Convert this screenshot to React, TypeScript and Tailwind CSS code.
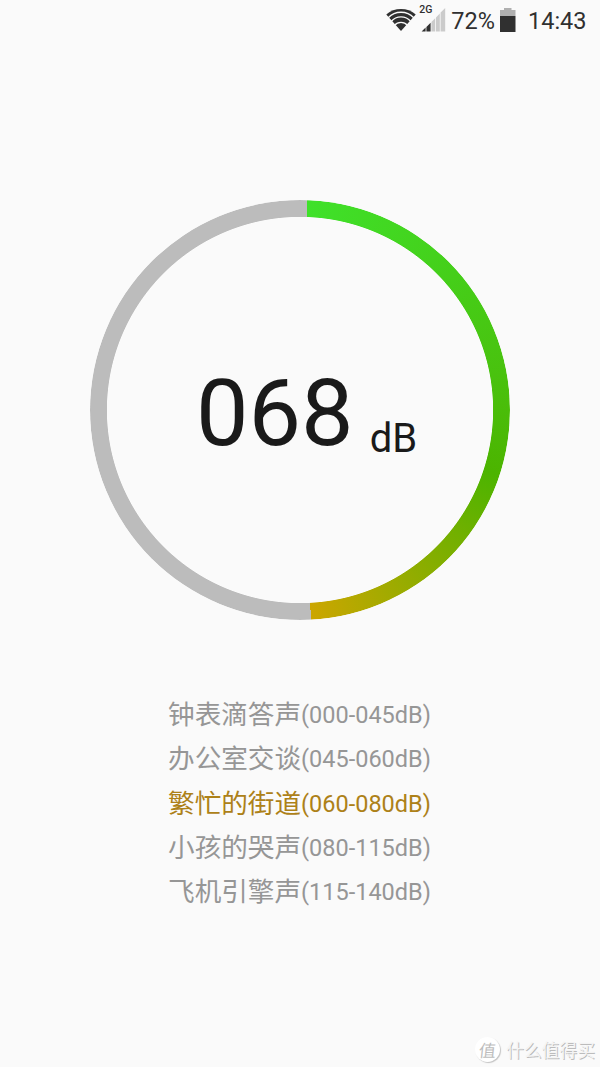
import { clsx } from "clsx";

const levels = [
  { label: "钟表滴答声", range: "(000-045dB)" },
  { label: "办公室交谈", range: "(045-060dB)" },
  { label: "繁忙的街道", range: "(060-080dB)", active: true },
  { label: "小孩的哭声", range: "(080-115dB)" },
  { label: "飞机引擎声", range: "(115-140dB)" },
];

function WifiIcon() {
  return (
    <svg className="h-[24px] w-[30px]" viewBox="0 0 30 24">
      <path d="M15 23 L0.3 6.4 A22.6 22.6 0 0 1 29.7 6.4 Z" fill="#303030" />
      <g fill="none" stroke="#fafafa" strokeWidth="1.3">
        <path d="M2.2 9.8 A17.5 17.5 0 0 1 27.8 9.8" />
        <path d="M5.2 13.5 A12.8 12.8 0 0 1 24.8 13.5" />
        <path d="M8.5 17.3 A8.5 8.5 0 0 1 21.5 17.3" />
      </g>
    </svg>
  );
}

function SignalIcon() {
  return (
    <div className="relative h-[24px] w-[25px]">
      <svg className="h-[24px] w-[25px]" viewBox="0 0 25 24">
        <path d="M0.6 23.5 L4.6 19.6 V23.5Z M5.4 18.9 L9.6 14.8 V23.5 H5.4Z" fill="#303030" />
        <path
          d="M10.4 14 L14.2 10.2 V23.5 H10.4Z M15 9.4 L18.8 5.4 V23.5 H15Z M19.6 4.5 L24.2 0 V23.5 H19.6Z"
          fill="#cbcbcb"
        />
      </svg>
      <span className="absolute -top-[3px] -left-[2px] text-[10.5px] leading-[10px] font-medium">2G</span>
    </div>
  );
}

function BatteryIcon() {
  return (
    <svg className="h-[24px] w-[16px]" viewBox="0 0 16 24">
      <path d="M4 0 H11.5 V2 H15.5 V8 H0 V2 H4Z" fill="#b0b0b0" />
      <path d="M0 8 H15.5 V24 H0Z" fill="#303030" />
    </svg>
  );
}

function StatusBar() {
  return (
    <header className="flex h-[40px] items-center justify-end pr-[13.5px] text-[23.5px] text-[#303030]">
      <WifiIcon />
      <div className="ml-[5px]">
        <SignalIcon />
      </div>
      <span className="ml-[5px] pt-[2px] leading-[40px]">72%</span>
      <div className="ml-[5px]">
        <BatteryIcon />
      </div>
      <span className="ml-[12px] pt-[2px] leading-[40px]">14:43</span>
    </header>
  );
}

function Gauge() {
  return (
    <div className="relative mx-auto mt-[160px] h-[420px] w-[420px]">
      <div className="h-full w-full rounded-full bg-[conic-gradient(#bcbcbc_2deg,#3fe12a_2deg,#49c20e_80deg,#4cb400_108deg,#cca600_177deg,#bcbcbc_177deg)] [mask-image:radial-gradient(circle,transparent_192.7px,black_193.5px)]" />
      <div className="absolute inset-0 flex items-baseline pt-[158px] pl-[106px] text-[#1a1a1a]">
        <span className="text-[93.5px] leading-[110px]">068</span>
        <span className="ml-[16px] translate-y-[7px] text-[40px] leading-[48px]">dB</span>
      </div>
    </div>
  );
}

function Watermark() {
  return (
    <div className="absolute top-[1035px] left-[475px] flex items-center font-['Noto_Sans_CJK_SC',sans-serif]">
      <span className="flex h-[25px] w-[25px] items-center justify-center rounded-full bg-white text-[17px] leading-none text-[#bdbdbd] shadow-[1px_1px_1px_#c4c4c4]">
        <span className="-skew-x-6">值</span>
      </span>
      <span className="ml-[6px] text-[17.8px] leading-[28px] whitespace-nowrap text-[#f4f4f4] [text-shadow:1px_1px_0.5px_#bcbcbc]">
        什么值得买
      </span>
    </div>
  );
}

export default function App() {
  return (
    <div className="relative h-[1067px] w-[600px] overflow-hidden bg-[#fafafa] font-[Roboto,'Noto_Sans_CJK_SC',sans-serif]">
      <StatusBar />
      <Gauge />
      <ul className="mt-[72.6px] flex flex-col">
        {levels.map((level) => (
          <li
            key={level.label}
            className={clsx(
              "flex h-[44.4px] items-center justify-center pr-[1px] whitespace-nowrap",
              level.active ? "text-[#ad8118]" : "text-[#969696]",
            )}
          >
            <span className="text-[26.6px] leading-[44px]">{level.label}</span>
            <span className="text-[23.5px] leading-[44px]">{level.range}</span>
          </li>
        ))}
      </ul>
      <Watermark />
    </div>
  );
}
